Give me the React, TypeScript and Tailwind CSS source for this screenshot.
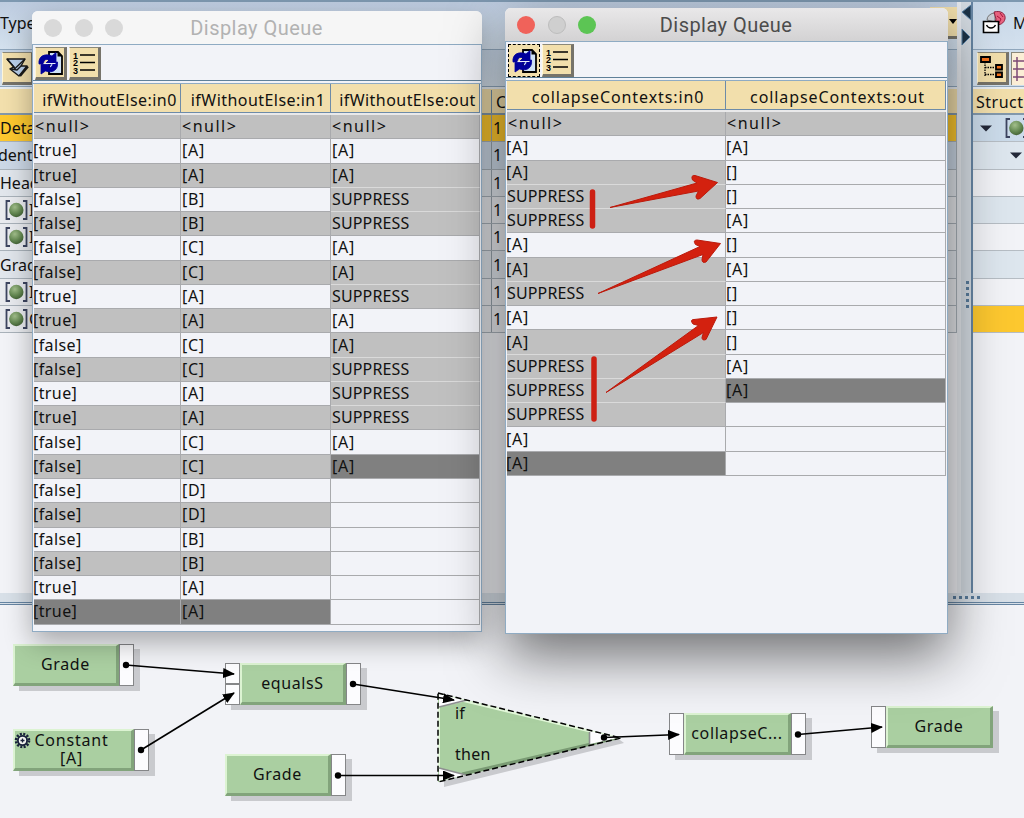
import clsx from 'clsx';

type Tone = 'light' | 'gray' | 'dark';

interface Cell {
  text: string;
  tone: Tone;
}

const TONES: Record<Tone, string> = {
  light: 'bg-[#f2f3f8]',
  gray: 'bg-[#c0c0c0]',
  dark: 'bg-[#808080]',
};

const TONE_KEYS: Record<string, Tone> = { w: 'light', g: 'gray', d: 'dark' };

const VALUES: Record<string, string> = {
  n: '<null>',
  t: '[true]',
  f: '[false]',
  A: '[A]',
  B: '[B]',
  C: '[C]',
  D: '[D]',
  S: 'SUPPRESS',
  e: '[]',
  '-': '',
};

// Each column is a string of value keys and a string of tone keys
const column = (values: string, tones: string): Cell[] =>
  values.split('').map((v, i) => ({ text: VALUES[v], tone: TONE_KEYS[tones[i]] }));

const IF_COLUMNS = [
  { title: 'ifWithoutElse:in0', width: 'w-[147px]', cells: column('nttffffttffttfffffftt', 'gwgwgwgwgwgwgwgwgwgwd') },
  { title: 'ifWithoutElse:in1', width: 'w-[150px]', cells: column('nAABBCCAACCAACCDDBBAA', 'gwgwgwgwgwgwgwgwgwgwd') },
  { title: 'ifWithoutElse:out', width: 'w-[149px]', cells: column('nAASSAASAASSSAA------', 'gwgggwggwggggwdwwwwww') },
];

const COLLAPSE_COLUMNS = [
  { title: 'collapseContexts:in0', width: 'w-[219px]', cells: column('nAASSAASAASSSAA', 'gwgggwggwggggwd') },
  { title: 'collapseContexts:out', width: 'w-[220px]', cells: column('nAeeAeAeeeAA---', 'gwwwwwwwwwwdwww') },
];

const TREE_ROWS = [
  { label: 'Deta', leaf: false, color: 'bg-[#fdc82f]' },
  { label: 'dent', leaf: false, color: 'bg-[#ccd8e6]' },
  { label: 'Head', leaf: false, color: 'bg-[#e1e6ec]' },
  { label: 'I', leaf: true, color: 'bg-[#e9ebef]' },
  { label: 'I', leaf: true, color: 'bg-[#e9ebef]' },
  { label: 'Grad', leaf: false, color: 'bg-[#e1e6ec]' },
  { label: 'I', leaf: true, color: 'bg-[#e9ebef]' },
  { label: 'C', leaf: true, color: 'bg-[#e9ebef]' },
];

const STRUCT_ROWS = [
  'bg-[#cbdbea]',
  'bg-[#dde6ee]',
  'bg-[#f2f3f7]',
  'bg-[#dde6ee]',
  'bg-[#f2f3f7]',
  'bg-[#dde6ee]',
  'bg-[#f2f3f7]',
  'bg-[#fdc82f]',
];

const RefreshIcon = () => (
  <svg width="26" height="26" viewBox="0 0 26 26">
    <path d="M12 2h9l4 4v18H12z" fill="#cfe2f6" stroke="#000" strokeWidth="1.8" />
    <path d="M20.500 2v4.500H25z" fill="#000" />
    <g fill="#00009c" stroke="#00009c" strokeWidth="0.8">
      <path d="M2 14C1 6 8 3 15 6l4-3.500V13H9l3-3c-3-1.500-5.500 0-5.500 4z" />
      <path d="M20.500 12c1 8-5 11.500-12 9l-4.500 3V14.500h10l-3 3c3 1 5-1.500 5-5z" />
    </g>
    <path d="M6.500 13.500h12" stroke="#e8effa" strokeWidth="1.200" />
  </svg>
);

const ListIcon = () => (
  <svg width="26" height="26" viewBox="0 0 26 26">
    <g className="font-['Liberation_Sans'] text-[9px] font-bold" fill="#000">
      <text x="2" y="8.500">1</text>
      <text x="2" y="16">2</text>
      <text x="2" y="23.500">3</text>
    </g>
    <path d="M9 5h15M9 12.500h15M9 20h15" stroke="#000" strokeWidth="1.6" />
  </svg>
);

const CollapseAllIcon = () => (
  <svg width="26" height="26" viewBox="0 0 26 26" fill="#b9cfea" stroke="#1a1a1a" strokeWidth="1.400" strokeLinejoin="round">
    <path d="M3 5h18l-4 7h6l-8 10-9-7 4-2z" />
    <path d="M3 5l8 9.500L21 5M7 15l6 1 4-4" fill="none" />
    <path d="M16 22l8-9.500" strokeWidth="2.200" />
  </svg>
);

const TreeIcon = () => (
  <svg width="26" height="26" viewBox="0 0 26 26">
    <path d="M6 8v15M6 13.500h10M6 20.500h10" stroke="#000" strokeWidth="1.3" strokeDasharray="1.500 1" fill="none" />
    <g fill="#f4721b" stroke="#000" strokeWidth="1.800">
      <path d="M2 3h9v5H2zM17 11h6v4.500h-6zM17 18.500h6V23h-6z" />
    </g>
  </svg>
);

const MailIcon = () => (
  <svg width="26" height="26" viewBox="0 0 26 26">
    <path d="M5 10a8 7 0 0 1 8-7v9z" fill="#c9ced6" stroke="#777" />
    <path d="M12 2c7-2 12 2 11 7-1 4-5 7-10 5l1-5z" fill="#e8637f" stroke="#8e2440" />
    <path d="M15 6l4 3-2 4M18 3l3 4" stroke="#a8123a" fill="none" />
    <path d="M1.500 11.500h15v11h-15z" fill="#fff" stroke="#000" strokeWidth="1.6" />
    <path d="M4.500 15c2 4 7 4 9 0" fill="none" stroke="#000" strokeWidth="1.3" />
  </svg>
);

const BallIcon = () => (
  <svg width="23" height="20" viewBox="0 0 23 20" className="shrink-0">
    <defs>
      <radialGradient id="ball" cx="0.4" cy="0.3" r="0.75">
        <stop offset="0" stopColor="#a3c08c" />
        <stop offset="0.6" stopColor="#648952" />
        <stop offset="1" stopColor="#3f5e33" />
      </radialGradient>
    </defs>
    <path d="M5 1H1.500v18H5M18 1h3.500v18H18" fill="none" stroke="#3d4560" strokeWidth="1.800" />
    <circle cx="11.300" cy="10" r="7.200" fill="url(#ball)" />
  </svg>
);

const Caret = () => (
  <svg width="12" height="7" viewBox="0 0 12 7" className="shrink-0">
    <path d="M0 .500h12L6 6.500z" fill="#232838" />
  </svg>
);

interface ToolButtonProps {
  children: React.ReactNode;
  focused?: boolean;
}

const ToolButton = ({ children, focused }: ToolButtonProps) => (
  <button
    className={clsx(
      'flex h-[33px] w-[32px] shrink-0 items-center justify-center bg-[#f2dfac]',
      focused
        ? 'border border-dashed border-black'
        : 'border-t border-r-[3px] border-b-[3px] border-l border-t-[#8b8879] border-r-[#76736a] border-b-[#76736a] border-l-[#fff6d8]',
    )}
  >
    {children}
  </button>
);

interface QueueWindowProps {
  active?: boolean;
  columns: typeof IF_COLUMNS;
  className: string;
}

const QueueWindow = ({ active, columns, className }: QueueWindowProps) => (
  <div className={clsx('absolute flex flex-col overflow-hidden rounded-t-[6px] bg-[#f2f3f8]', className)}>
    {/* Title bar */}
    <div
      className={clsx(
        'flex h-[33px] shrink-0 items-center pl-3',
        active ? 'bg-linear-to-b from-[#e9e8e9] to-[#d3d2d3]' : 'bg-[#f6f6f6]',
      )}
    >
      <div className="flex w-[91px] gap-[12.5px]">
        <span className={clsx('size-[18px] rounded-full', active ? 'bg-[#f0625a]' : 'bg-[#d9d9d9]')} />
        <span className={clsx('size-[18px] rounded-full', active ? 'border border-[#bdbdbd] bg-[#cfcfcf]' : 'bg-[#d9d9d9]')} />
        <span className={clsx('size-[18px] rounded-full', active ? 'bg-[#5cc554]' : 'bg-[#d9d9d9]')} />
      </div>
      <div
        className={clsx(
          'flex-1 pr-[104px] text-center font-[Roboto,sans-serif] text-[20px] tracking-[0.45px]',
          active ? 'text-[#4c4c4c]' : 'text-[#b2b2b2]',
        )}
      >
        Display Queue
      </div>
    </div>
    <div className="flex min-h-0 flex-1 flex-col border border-[#8fabc3]">
      {/* Toolbar */}
      <div className="flex h-[36px] shrink-0 gap-[2px] border-b border-[#5f8099] pt-[2px] pl-[2px]">
        <ToolButton focused={active}>
          <RefreshIcon />
        </ToolButton>
        <ToolButton>
          <ListIcon />
        </ToolButton>
      </div>
      <div className="mt-[2px] flex border-t border-[#8fabc3] pl-px">
        {columns.map((col, c) => (
          <div key={col.title} className={clsx('flex shrink-0 flex-col', col.width)}>
            <div
              className={clsx(
                'flex h-[29px] items-center justify-center border-r border-b border-[#6d8ba8] bg-[#f2dfac] pt-[3px] whitespace-nowrap',
                active ? 'pl-[4px] tracking-[0.9px]' : 'pl-[5px] tracking-[0.45px]',
              )}
            >
              {col.title}
            </div>
            <div className="h-[2px] bg-[#e9e9ea]" />
            {col.cells.map((cell, i) => (
              <div
                key={i}
                className={clsx(
                  'flex h-[24.27px] shrink-0 items-center border-r border-b border-r-[#a9aaad] pb-px leading-none',
                  c > 0 && 'pl-px',
                  cell.tone === 'gray' && i > 0 && col.cells[i + 1]?.tone === 'gray' ? 'border-b-[#dadada]' : 'border-b-[#a9aaad]',
                  TONES[cell.tone],
                )}
              >
                <span
                  className={clsx(
                    cell.text === '<null>' && 'tracking-[1.5px]',
                    cell.text === '<null>' && c === 0 && 'pl-px',
                    cell.text === 'SUPPRESS' && 'tracking-[0.15px]',
                    cell.text.startsWith('[') && cell.text.length > 3 && '-ml-px tracking-[0.4px]',
                    cell.text.startsWith('[') && cell.text.length <= 3 && 'tracking-[0.7px]',
                    cell.text.startsWith('[') && cell.text.length <= 3 && active && '-ml-px',
                  )}
                >
                  {cell.text}
                </span>
              </div>
            ))}
          </div>
        ))}
      </div>
    </div>
  </div>
);

const MappingPane = () => (
  <div className="flex w-[957px] shrink-0 flex-col overflow-hidden">
    <div className="flex h-[48px] shrink-0 items-center justify-between border-b border-[#90a7bd] bg-linear-to-b from-[#bdcce0] to-[#d4e1ee] pb-[5px]">
      <span>Type</span>
      <span className="mr-[-3px] flex h-[32px] w-[30px] items-center justify-end border-r-[3px] border-b-[3px] border-[#76736a] bg-[#f2dfac]">
        <svg width="8" height="5" viewBox="0 0 8 5">
          <path d="M0 0h8L4 5z" />
        </svg>
      </span>
    </div>
    <div className="flex h-[37px] shrink-0 items-center border-b border-[#90a7bd] bg-linear-to-b from-[#c4d3e4] to-[#d4e0ec] pl-[2px]">
      <ToolButton>
        <CollapseAllIcon />
      </ToolButton>
    </div>
    {/* Table header */}
    <div className="flex h-[28px] shrink-0 items-center border-y-2 border-t-[#e8edf2] border-b-[#8398ab] bg-[#f2dfac] pt-[1px]">
      <div className="h-full w-[492px] border-r border-[#6d8ba8]" />
      <span className="ml-[4px]">C</span>
    </div>
    {TREE_ROWS.map((row, i) => (
      <div key={i} className={clsx('flex h-[27.3px] shrink-0 items-center border-r border-b border-[#a9b2ba]', row.color)}>
        <div className="flex h-full w-[492px] items-center border-r border-[#98a3ad]">
          {row.leaf && (
            <span className="ml-[5px] flex">
              <BallIcon />
            </span>
          )}
          <span className={clsx(row.leaf && 'ml-px', row.label === 'dent' && '-ml-[2px]')}>{row.label}</span>
        </div>
        <span className="ml-[1px]">1</span>
      </div>
    ))}
  </div>
);

const VerticalSplitter = () => (
  <div className="flex w-[16px] shrink-0 flex-col items-end border-r-2 border-l-4 border-r-[#6685a3] border-l-[#e6e9ee] bg-[#d4dbe2]">
    <svg width="10" height="46" viewBox="0 0 10 46">
      <path d="M10 3L1 10l9 8z" fill="#1d3347" stroke="#5b84a8" />
      <path d="M1 27l8 8-8 8z" fill="#1d3347" stroke="#5b84a8" />
    </svg>
    <div className="mt-[233px] mr-[2px] flex flex-col gap-[3px]">
      {[0, 1, 2, 3, 4].map((n) => (
        <span key={n} className="size-[3px] bg-[#5a7c9c]" />
      ))}
    </div>
  </div>
);

const StructurePane = () => (
  <div className="flex flex-1 flex-col overflow-hidden">
    <div className="flex h-[48px] shrink-0 items-center gap-[5px] border-b border-[#90a7bd] bg-linear-to-b from-[#c7d7e8] to-[#d4e1ee] pb-[5px] pl-[9px]">
      <span className="shrink-0">
        <MailIcon />
      </span>
      <span>M</span>
    </div>
    <div className="flex h-[37px] shrink-0 items-center gap-[2px] border-b border-[#90a7bd] bg-[#d0deeb] pl-[4px]">
      <ToolButton>
        <TreeIcon />
      </ToolButton>
      <div className="h-[33px] w-[32px] shrink-0 border-t border-l border-[#8b8879] bg-[#fbeed6]">
        <svg width="20" height="30" viewBox="0 0 20 30">
          <path d="M5 4v24M14 4v24M1 8h19M1 16h19M1 24h19" stroke="#7d4a76" strokeWidth="1.5" />
        </svg>
      </div>
    </div>
    <div className="flex h-[28px] shrink-0 items-center border-y-2 border-t-[#e8edf2] border-b-[#8398ab] bg-[#f2dfac] pt-[1px] pl-[3px] tracking-[0.5px]">
      Struct
    </div>
    {STRUCT_ROWS.map((color, i) => (
      <div key={i} className={clsx('flex h-[27.3px] shrink-0 items-center border-b border-[#b6bdc4]', color)}>
        {i === 0 && (
          <div className="ml-[7px] flex items-center gap-[13px]">
            <Caret />
            <BallIcon />
          </div>
        )}
        {i === 1 && (
          <div className="ml-[37px] flex">
            <Caret />
          </div>
        )}
      </div>
    ))}
  </div>
);

interface NodeProps {
  place: string;
  width?: string;
  inputs?: number;
  output?: boolean;
  children: React.ReactNode;
}

const Port = () => <span className="w-[15px] flex-1 border border-[#858688] bg-[#fcfcfe]" />;

const FunctionNode = ({ place, width = 'w-[106px]', inputs = 0, output = true, children }: NodeProps) => (
  <div className={clsx('absolute flex h-[42px] shadow-[6px_5px_0_#c9cace]', place)}>
    {inputs > 0 && (
      <div className="flex w-[15px] flex-col">
        {Array.from({ length: inputs }, (_, i) => (
          <Port key={i} />
        ))}
      </div>
    )}
    <div
      className={clsx(
        'flex items-center justify-center border-t-2 border-r-[3px] border-b-[3px] border-l-2 border-t-[#dcf3d2] border-r-[#82a47b] border-b-[#82a47b] border-l-[#dcf3d2] bg-[#aacfa1] pb-[2px] text-center leading-[18px] tracking-[0.6px] whitespace-nowrap',
        width,
      )}
    >
      {children}
    </div>
    {output && (
      <div className="flex w-[15px] flex-col">
        <Port />
      </div>
    )}
  </div>
);

const WIRES = [
  [126, 665, 234, 674],
  [141, 750, 234, 693],
  [353, 684, 454, 700],
  [338, 775.5, 454, 775.5],
  [604, 737.5, 679, 734.5],
  [798, 734.5, 882, 727],
];

const Diagram = () => (
  <div className="absolute inset-0">
    <FunctionNode place="left-[13px] top-[644px]">Grade</FunctionNode>
    <FunctionNode place="left-[13px] top-[729px]" width="w-[121px]">
      <span className="-ml-[23px] flex items-start">
        <svg width="17" height="17" viewBox="0 0 17 17" className="mt-px mr-[3px]">
          <circle cx="8.5" cy="8.5" r="6.500" fill="none" stroke="#18213a" strokeWidth="2.6" strokeDasharray="2 1.4" />
          <circle cx="8.5" cy="8.5" r="4.600" fill="#f3f5f0" stroke="#18213a" strokeWidth="1.8" />
          <path d="M8.500 6.500v4M6.500 8.500h4" stroke="#18213a" strokeWidth="1.3" />
        </svg>
        <span className="tracking-[0.8px]">
          Constant
          <br />
          [A]
        </span>
      </span>
    </FunctionNode>
    <FunctionNode place="left-[225px] top-[663px]" inputs={2}>
      equalsS
    </FunctionNode>
    <FunctionNode place="left-[225px] top-[754px]">Grade</FunctionNode>
    <FunctionNode place="left-[669px] top-[713px]" width="w-[107px]" inputs={1}>
      collapseC...
    </FunctionNode>
    <FunctionNode place="left-[871px] top-[706px]" width="w-[107px]" inputs={1} output={false}>
      Grade
    </FunctionNode>
    <svg width="1024" height="818" viewBox="0 0 1024 818" className="absolute inset-0">
      <defs>
        <marker id="head" markerWidth="12" markerHeight="10" refX="11" refY="5" orient="auto" markerUnits="userSpaceOnUse">
          <path d="M0 0l12 5-12 5z" />
        </marker>
      </defs>
      <path d="M444 787L624 743 616 737 444 780z" fill="#c9cace" />
      <path d="M438 693L621 738 438 782z" fill="#aacfa1" />
      <path d="M440 695L614 737" stroke="#e3f8da" strokeWidth="2.500" />
      <path d="M439 706v63" stroke="#e3f8da" strokeWidth="2" />
      <path d="M462 774L617 738" stroke="#7a9b74" strokeWidth="3" />
      <path d="M439 694l28 7-28 6zM439 768l27 7-27 6zM590 731l28 7-28 6z" fill="#fcfcfe" />
      <path d="M439 707l28-7M439 768l27 7M589.500 732v12" stroke="#8d8e90" strokeWidth="1.6" />
      <path d="M438 693L621 738 438 782z" fill="none" stroke="#000" strokeWidth="1.5" strokeDasharray="6 3" />
      {WIRES.map(([x1, y1, x2, y2]) => (
        <g key={`${x1}-${y1}`}>
          <circle cx={x1} cy={y1} r="3.200" />
          <line x1={x1} y1={y1} x2={x2} y2={y2} stroke="#000" strokeWidth="1.600" markerEnd="url(#head)" />
        </g>
      ))}
    </svg>
    <span className="absolute top-[702px] left-[455px]">if</span>
    <span className="absolute top-[743px] left-[455px] tracking-[0.3px]">then</span>
  </div>
);

// Red marker drawings over the collapseContexts queue
const Annotations = () => (
  <svg width="1024" height="818" viewBox="0 0 1024 818" className="pointer-events-none absolute inset-0">
    <g fill="#d3210f" stroke="#bb1a0c" strokeWidth="1" strokeLinejoin="round">
      <path d="M610 207.500L697 183 692.500 180Q690.500 175 695 175.500L717.500 182.500 700 198.500Q696 200.500 696 196L698.500 191Z" />
      <path d="M598 293.500L700 246.500 695.500 244.500Q692.500 240 697 240L720.500 243.500 706 262Q702 263.500 702 259.500L703 254.500Z" />
      <path d="M606 392.500L698.500 325.500 693 324Q689.500 319.500 694 319.500L717 317 706 339.500Q702 341 702 337.500L703.500 332.500Z" />
    </g>
    <path d="M592.500 192v34M594 359v60" stroke="#cd2013" strokeWidth="5.500" strokeLinecap="round" />
  </svg>
);

export default function App() {
  return (
    <div className="relative flex h-[818px] w-[1024px] flex-col overflow-hidden bg-[#f2f3f7] font-['Noto_Sans',sans-serif] text-[16px] leading-[22px] text-[#111]">
      <div className="flex h-[593px] shrink-0 border-t-2 border-[#7d98b0]">
        <MappingPane />
        <VerticalSplitter />
        <StructurePane />
      </div>
      <div className="flex h-[12px] shrink-0 gap-[3px] border-b-[3px] border-double border-[#6685a3] bg-[#d8e0e8] pt-[3px] pl-[953px]">
        {[0, 1, 2, 3, 4].map((n) => (
          <span key={n} className="size-[3px] bg-[#5a7c9c]" />
        ))}
      </div>
      <Diagram />
      <QueueWindow
        columns={IF_COLUMNS}
        className="top-[11px] left-[32px] h-[621px] w-[450px] shadow-[0_10px_28px_rgba(0,0,0,0.32)]"
      />
      <QueueWindow
        active
        columns={COLLAPSE_COLUMNS}
        className="top-[8px] left-[505px] h-[626px] w-[443px] shadow-[0_22px_56px_rgba(0,0,0,0.55)]"
      />
      <Annotations />
    </div>
  );
}
